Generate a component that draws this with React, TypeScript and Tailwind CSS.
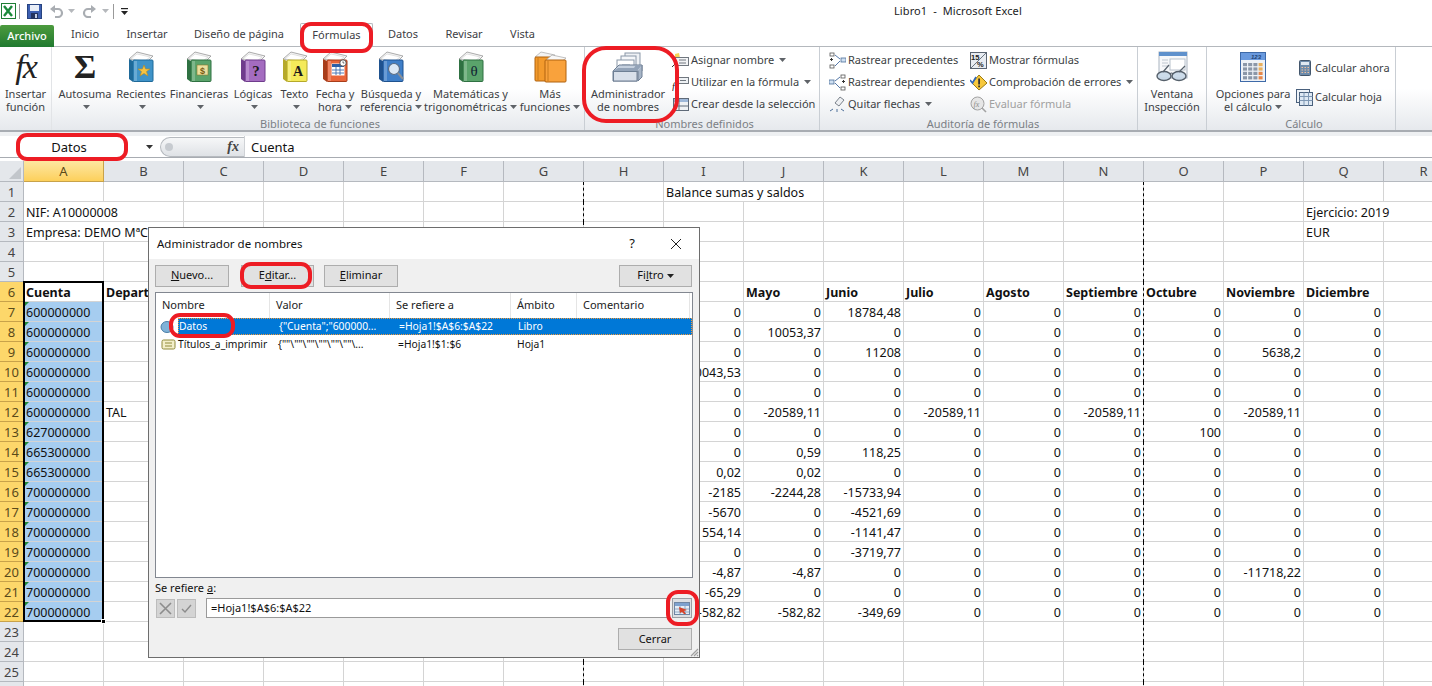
import React from 'react';

const COLS = 'ABCDEFGHIJKLMNOPQR'.split('');

type Cell = { t: string; b?: boolean; r?: boolean };
const cells: Record<string, Cell> = {
  I1: { t: 'Balance sumas y saldos' },
  A2: { t: 'NIF: A10000008' },
  Q2: { t: 'Ejercicio: 2019' },
  A3: { t: 'Empresa: DEMO MªC' },
  Q3: { t: 'EUR' },
  B12: { t: 'TAL' },
};
['Cuenta', 'Depart'].forEach((t, i) => (cells[COLS[i] + '6'] = { t, b: true }));
['Mayo', 'Junio', 'Julio', 'Agosto', 'Septiembre', 'Octubre', 'Noviembre', 'Diciembre'].forEach(
  (t, i) => (cells[COLS[9 + i] + '6'] = { t, b: true })
);
const acc = ['600000000','600000000','600000000','600000000','600000000','600000000','627000000','665300000','665300000','700000000','700000000','700000000','700000000','700000000','700000000','700000000'];
acc.forEach((t, i) => (cells['A' + (7 + i)] = { t }));
const nums: string[][] = [
  ['0','0','18784,48','0','0','0','0','0','0'],
  ['0','10053,37','0','0','0','0','0','0','0'],
  ['0','0','11208','0','0','0','0','5638,2','0'],
  ['-10043,53','0','0','0','0','0','0','0','0'],
  ['0','0','0','0','0','0','0','0','0'],
  ['0','-20589,11','0','-20589,11','0','-20589,11','0','-20589,11','0'],
  ['0','0','0','0','0','0','100','0','0'],
  ['0','0,59','118,25','0','0','0','0','0','0'],
  ['0,02','0,02','0','0','0','0','0','0','0'],
  ['-2185','-2244,28','-15733,94','0','0','0','0','0','0'],
  ['-5670','0','-4521,69','0','0','0','0','0','0'],
  ['-1554,14','0','-1141,47','0','0','0','0','0','0'],
  ['0','0','-3719,77','0','0','0','0','0','0'],
  ['-4,87','-4,87','0','0','0','0','0','-11718,22','0'],
  ['-65,29','0','0','0','0','0','0','0','0'],
  ['-582,82','-582,82','-349,69','0','0','0','0','0','0'],
];
nums.forEach((row, ri) =>
  row.forEach((t, ci) => (cells[COLS[8 + ci] + (7 + ri)] = { t, r: true }))
);

const Caret = ({ c = '#5f6368' }: { c?: string }) => (
  <svg width="7" height="4" viewBox="0 0 7 4" className="inline-block ml-[3px] align-middle shrink-0">
    <polygon points="0,0 7,0 3.5,4" fill={c} />
  </svg>
);

const Book = ({ c, d, children }: { c: string; d: string; children?: React.ReactNode }) => (
  <svg width="26" height="32" viewBox="0 0 26 32">
    <polygon points="1,8 9,1 25,5 19,11" fill="#f4f4f4" stroke="#8a8a8a" strokeWidth=".7" />
    <polygon points="3,8 9,3 22,6 17,10" fill="#ffffff" stroke="#c8c8c8" strokeWidth=".5" />
    <polygon points="5,10 5,31 1,28 1,8" fill={d} />
    <rect x="5" y="9" width="20" height="21.5" rx="1" fill={c} stroke={d} strokeWidth="1" />
    <rect x="6" y="10" width="3" height="20" fill="#ffffff" opacity=".22" />
    {children}
  </svg>
);

const FxIcon = () => (
  <span className="font-['Liberation_Serif',serif] italic text-[34px] leading-none text-[#222] tracking-[-2px]">
    fx
  </span>
);

const Calendar = () => (
  <g>
    <rect x="10" y="13" width="12" height="11" fill="#fff" stroke="#fff" />
    <rect x="10" y="13" width="12" height="3" fill="#2d5fa8" />
    <path d="M10 19h12M10 22h12M14 16v8M18 16v8" stroke="#3f6db0" strokeWidth=".9" />
    <circle cx="21" cy="12" r="3.2" fill="#fff" stroke="#333" strokeWidth=".8" />
    <path d="M21 10.3V12h1.4" stroke="#333" strokeWidth=".7" fill="none" />
  </g>
);

const Books = () => (
  <svg width="33" height="32" viewBox="0 0 33 32">
    <polygon points="1,6 7,1 21,4 15,9" fill="#f3f3f3" stroke="#999" strokeWidth=".6" />
    <rect x="1" y="6" width="17" height="24" rx="1" fill="#f39a2c" stroke="#b0620f" />
    <polygon points="12,9 18,4 32,7 26,12" fill="#f8f8f8" stroke="#999" strokeWidth=".6" />
    <rect x="11" y="9" width="21" height="22" rx="1" fill="#f9a23c" stroke="#b0620f" />
    <path d="M4 7v22M14 10v20" stroke="#c87a1c" strokeWidth="1" />
  </svg>
);

const CardBox = () => (
  <svg width="32" height="30" viewBox="0 0 32 30">
    <rect x="13" y="1" width="15" height="13" fill="#eef1f5" stroke="#8997a8" />
    <rect x="9" y="4" width="15" height="13" fill="#f5f7fa" stroke="#8997a8" />
    <rect x="5" y="8" width="17" height="11" fill="#ffffff" stroke="#8997a8" />
    <path d="M10 13h8" stroke="#8997a8" />
    <polygon points="1,19 7,13 30,13 30,19 25,19 25,29 1,29" fill="#c5d0de" stroke="#6e7f94" />
    <polygon points="1,19 25,19 30,13 24,13 22,16 6,16" fill="#93a3b8" />
    <rect x="1.5" y="19.5" width="23.5" height="9.5" fill="#d9e0ea" stroke="#6e7f94" />
    <path d="M26 19v10l4-4V13" fill="#a7b5c7" stroke="#6e7f94" />
  </svg>
);

const Glasses = () => (
  <svg width="34" height="32" viewBox="0 0 34 32">
    <rect x="4" y="1" width="28" height="26" fill="#f7f8fa" stroke="#a9b3c0" />
    <rect x="4" y="1" width="28" height="4" fill="#5f91cc" />
    <rect x="15" y="8" width="15" height="11" fill="#fff" stroke="#b8c1cc" />
    <path d="M7 9h6M7 12h6M7 15h6" stroke="#c0c7d0" />
    <ellipse cx="9" cy="25" rx="7" ry="4.5" fill="#c8d8e8" fillOpacity=".9" stroke="#56606b" strokeWidth="1.4" />
    <ellipse cx="24" cy="25" rx="7" ry="4.5" fill="#c8d8e8" fillOpacity=".9" stroke="#56606b" strokeWidth="1.4" />
    <path d="M15 23q1.5-2 3 0M8 21L14 14M24 21l6-6" stroke="#56606b" strokeWidth="1.2" fill="none" />
  </svg>
);

const CalcBig = () => (
  <svg width="26" height="30" viewBox="0 0 26 30">
    <rect x=".5" y=".5" width="25" height="29" fill="#eef2f7" stroke="#3e6aa8" />
    <polygon points="1,1 25,1 25,8 1,8" fill="#6a9ade" />
    <text x="21" y="7" fontSize="6" fontStyle="italic" fontWeight="700" textAnchor="end" fill="#20406f" fontFamily="Liberation Sans, sans-serif">123</text>
    {[0, 1, 2, 3].map((r) =>
      [0, 1, 2, 3].map((c) => (
        <rect key={r + '-' + c} x={3 + c * 5.2} y={11 + r * 4.4} width="4" height="3.2"
          fill={c === 3 && r > 1 ? '#e6884c' : c === 3 ? '#e8b05e' : '#8b97a8'} />
      ))
    )}
  </svg>
);

const S = ({ children }: { children: React.ReactNode }) => (
  <svg width="17" height="17" viewBox="0 0 17 17" className="shrink-0">{children}</svg>
);

const NameTag = () => (
  <S>
    <polygon points="3,2 7,1 8,6 3,6" fill="#f5d457" />
    <rect x="3.5" y="5.5" width="13" height="8" fill="#f3f4f6" stroke="#70777f" />
    <path d="M7 8h7M7 11h7" stroke="#70777f" />
    <path d="M0 15l3-3" stroke="#333" />
  </S>
);
const UseIn = () => (
  <S>
    <rect x="5.5" y="3.5" width="11" height="6" fill="#eef1f4" stroke="#70777f" />
    <text x="0" y="16" fontSize="10" fontStyle="italic" fontFamily="Liberation Serif, serif" fill="#222">f</text>
    <path d="M8 6.5h6" stroke="#70777f" />
  </S>
);
const FromSel = () => (
  <S>
    <rect x="1.5" y="2.5" width="15" height="12" fill="#eef1f4" stroke="#5f6a78" />
    <rect x="2" y="3" width="14" height="3" fill="#9db7d8" />
    <path d="M1.5 10h15M7 3v11" stroke="#5f6a78" />
  </S>
);
const TracePre = () => (
  <S>
    <rect x="1" y="1" width="4" height="3" fill="#fff" stroke="#555" strokeWidth=".8" />
    <rect x="1" y="13" width="4" height="3" fill="#fff" stroke="#555" strokeWidth=".8" />
    <rect x="12" y="6" width="5" height="4" fill="#cfe0f2" stroke="#4d6f99" strokeWidth=".8" />
    <path d="M4 7.5H1M2.5 6v3" stroke="#333" />
    <path d="M6 3l5 4M6 14l5-5" stroke="#5578a8" />
  </S>
);
const TraceDep = () => (
  <S>
    <rect x="0" y="6" width="5" height="4" fill="#cfe0f2" stroke="#4d6f99" strokeWidth=".8" />
    <rect x="12" y="1" width="4" height="3" fill="#fff" stroke="#555" strokeWidth=".8" />
    <rect x="12" y="13" width="4" height="3" fill="#fff" stroke="#555" strokeWidth=".8" />
    <path d="M13 7.5h3M14.5 6v3" stroke="#333" />
    <path d="M6 7l5-4M6 9l5 5" stroke="#5578a8" />
  </S>
);
const Eraser = () => (
  <S>
    <polygon points="6,7 11,1 15,4 10,10" fill="#eef0f3" stroke="#7b828b" />
    <path d="M1 15l3-2M8 16v-3M15 15l-3-2" stroke="#4d6f99" />
  </S>
);
const ShowF = () => (
  <S>
    <rect x=".5" y=".5" width="16" height="16" fill="#e8ecf1" stroke="#5a6470" />
    <text x="1" y="8" fontSize="7.5" fontWeight="700" fontFamily="Liberation Sans, sans-serif" fill="#222">15</text>
    <text x="7" y="15" fontSize="7.5" fontWeight="700" fontFamily="Liberation Sans, sans-serif" fill="#222">%</text>
    <path d="M1 16L16 1" stroke="#6b7683" />
  </S>
);
const ErrCheck = () => (
  <S>
    <polygon points="9,1 17,9 9,16 2,9" fill="#f7c83c" stroke="#9a7a12" />
    <rect x="8.2" y="4.5" width="1.8" height="6" fill="#333" />
    <rect x="8.2" y="11.5" width="1.8" height="1.8" fill="#333" />
    <path d="M0 6l2.5 3L6 3" stroke="#2f66b8" strokeWidth="1.6" fill="none" />
  </S>
);
const EvalF = () => (
  <S>
    <circle cx="7.5" cy="7.5" r="6.5" fill="#e6e6e6" stroke="#a2a2a2" />
    <text x="3.5" y="10.5" fontSize="8" fontStyle="italic" fontFamily="Liberation Serif, serif" fill="#8c8c8c">fx</text>
    <path d="M12 12l4 4" stroke="#a2a2a2" strokeWidth="1.6" />
  </S>
);
const CalcNow = () => (
  <S>
    <rect x="3.5" y=".5" width="11" height="15" rx="1" fill="#6e8cab" stroke="#43566c" />
    <rect x="5" y="2" width="8" height="3" fill="#dfe8f1" />
    <path d="M5.5 7.5h1.5M8.5 7.5H10M11.5 7.5H13M5.5 10h1.5M8.5 10H10M11.5 10H13M5.5 12.5h1.5M8.5 12.5H10M11.5 12.5H13" stroke="#f0c0a0" />
  </S>
);
const CalcSheet = () => (
  <S>
    <rect x=".5" y=".5" width="13" height="13" fill="#eef3f8" stroke="#49607c" />
    <rect x="3.5" y="3.5" width="13" height="13" fill="#dde8f3" stroke="#49607c" />
    <path d="M3.5 7.5h13M3.5 11.5h13M8 3.5v13M12.5 3.5v13" stroke="#7e97b3" />
  </S>
);

function LargeBtn({ w, icon, l1, l2, caret, ml }: { w: string; icon: React.ReactNode; l1: string; l2?: string; caret?: boolean; ml?: string }) {
  return (
    <div className={`flex flex-col items-center shrink-0 ${w} ${ml ?? ''}`}>
      <div className="h-[40px] flex items-center justify-center">{icon}</div>
      <div className="text-center leading-[13px] whitespace-nowrap">{l1}</div>
      <div className="flex items-center justify-center leading-[13px] whitespace-nowrap h-[13px]">
        {l2}
        {caret && <Caret />}
      </div>
    </div>
  );
}

function SmallBtn({ icon, t, caret, dim }: { icon: React.ReactNode; t: string; caret?: boolean; dim?: boolean }) {
  return (
    <div className={`flex items-center h-[22px] gap-[2px] whitespace-nowrap ${dim ? 'text-[#a0a0a0]' : ''}`}>
      {icon}
      <span>{t}</span>
      {caret && <Caret />}
    </div>
  );
}

function Group({ w, label, children }: { w: string; label?: string; children: React.ReactNode }) {
  return (
    <div className={`relative flex flex-col shrink-0 ${w} border-r border-[#c9ced4]`}>
      <div className="flex h-[68px] shrink-0">{children}</div>
      <div className="text-center text-[#7b7f85] leading-[13px] mt-[2px] whitespace-nowrap">{label ?? '\u00a0'}</div>
    </div>
  );
}

const Btn = ({ w, children }: { w: string; children: React.ReactNode }) => (
  <div className={`${w} h-[22px] flex items-center justify-center bg-[#e1e1e1] border border-[#adadad] text-[#111] whitespace-nowrap`}>
    {children}
  </div>
);

const Ring = ({ cls }: { cls: string }) => (
  <div className={`absolute border-[4px] border-[#ed1c24] z-30 pointer-events-none ${cls}`} />
);

export default function App() {
  return (
    <div className="relative w-[1432px] h-[686px] overflow-hidden bg-white font-['Noto_Sans',sans-serif] text-[11px] text-[#3c3f44] flex flex-col">
      {/* Title bar */}
      <div className="flex items-center h-[22px] shrink-0 relative">
        <div className="flex items-center pl-[1px] w-[894px] shrink-0">
          <svg width="15" height="16" viewBox="0 0 15 16">
            <rect x=".5" y=".5" width="14" height="15" fill="#fff" stroke="#1e7e34" />
            <path d="M3 3l8 10M11 3L3 13" stroke="#1c8a3b" strokeWidth="2.4" />
          </svg>
          <div className="w-px h-[15px] bg-[#9a9a9a] ml-[3px]" />
          <svg width="15" height="15" viewBox="0 0 15 15" className="ml-[7px]">
            <rect x=".5" y=".5" width="14" height="14" fill="#3c5fb1" stroke="#27437f" />
            <rect x="3" y="1" width="9" height="6" fill="#e9eef7" />
            <rect x="4" y="9" width="7" height="6" fill="#24345f" />
            <rect x="8" y="10" width="2" height="4" fill="#c5d0e6" />
          </svg>
          <svg width="14" height="14" viewBox="0 0 14 14" className="ml-[8px]">
            <path d="M3 5h5a4 4 0 0 1 0 8H5" fill="none" stroke="#a9adb2" strokeWidth="2.2" />
            <polygon points="0,5 5,1 5,9" fill="#a9adb2" />
          </svg>
          <span className="ml-[1px] flex"><Caret c="#b5b8bc" /></span>
          <svg width="14" height="14" viewBox="0 0 14 14" className="ml-[7px]">
            <path d="M11 5H6a4 4 0 0 0 0 8h3" fill="none" stroke="#a9adb2" strokeWidth="2.2" />
            <polygon points="14,5 9,1 9,9" fill="#a9adb2" />
          </svg>
          <span className="ml-[3px] flex"><Caret c="#b5b8bc" /></span>
          <div className="w-px h-[15px] bg-[#9a9a9a] ml-[4px]" />
          <svg width="9" height="9" viewBox="0 0 9 9" className="ml-[6px]">
            <rect x="1" y="1" width="7" height="1.2" fill="#222" />
            <polygon points="1,4 8,4 4.5,8" fill="#222" />
          </svg>
        </div>
        <div className="text-[11px] tracking-[0.1px] text-[#222] whitespace-pre">Libro1  -  Microsoft Excel</div>
      </div>

      {/* Tabs */}
      <div className="flex h-[25px] shrink-0 text-[11px] text-[#3d4044] border-b border-[#b4b8bd] items-end">
        <div className="w-[54px] h-[22px] mb-[-1px] rounded-t-[2px] bg-gradient-to-b from-[#4c9b3e] to-[#1f7a30] text-white font-medium flex items-center justify-center">Archivo</div>
        <div className="w-[62px] h-[23px] flex items-center justify-center">Inicio</div>
        <div className="w-[62px] h-[23px] flex items-center justify-center">Insertar</div>
        <div className="w-[122px] h-[23px] flex items-center justify-center">Diseño de página</div>
        <div className="w-[73px] h-[24px] mb-[-1px] flex items-center justify-center bg-white border border-b-0 border-[#b4b8bd] rounded-t-[2px]">Fórmulas</div>
        <div className="w-[60px] h-[23px] flex items-center justify-center">Datos</div>
        <div className="w-[62px] h-[23px] flex items-center justify-center">Revisar</div>
        <div className="w-[55px] h-[23px] flex items-center justify-center">Vista</div>
      </div>

      {/* Ribbon */}
      <div className="flex h-[85px] shrink-0 bg-gradient-to-b from-white via-white to-[#e6e9ed] border-b-2 border-[#a8acb2]">
        <div className="w-[51px] shrink-0 flex flex-col items-center">
          <div className="h-[40px] flex items-center justify-center"><FxIcon /></div>
          <div className="leading-[13px]">Insertar</div>
          <div className="leading-[13px]">función</div>
        </div>
        <Group w="w-[534px] pl-[4px] border-l border-l-[#e2e4e7]" label="Biblioteca de funciones">
          <LargeBtn w="w-[58px]" caret l2="" l1="Autosuma" icon={<span className="font-['Liberation_Serif',serif] font-bold text-[34px] leading-none text-[#222]">Σ</span>} />
          <LargeBtn w="w-[54px]" caret l2="" l1="Recientes" icon={<Book c="#3f93c8" d="#1f6a9a"><polygon points="16,14 17.6,18 22,18 18.5,20.6 20,25 16,22.4 12,25 13.5,20.6 10,18 14.4,18" fill="#f6c344" stroke="#b88a1c" strokeWidth=".6" /></Book>} />
          <LargeBtn w="w-[62px]" caret l2="" l1="Financieras" icon={<Book c="#5aa36b" d="#2f7142"><rect x="11" y="14" width="11" height="10" fill="#eadf9e" stroke="#8a7a2c" strokeWidth=".6" /><text x="16.5" y="22.5" fontSize="9" fontWeight="700" textAnchor="middle" fill="#7a5a10" fontFamily="Liberation Sans, sans-serif">$</text></Book>} />
          <LargeBtn w="w-[46px]" caret l2="" l1="Lógicas" icon={<Book c="#a46cc0" d="#6f3c8c"><text x="16" y="25" fontSize="15" fontWeight="700" textAnchor="middle" fill="#1a1a1a" fontFamily="Liberation Serif, serif">?</text></Book>} />
          <LargeBtn w="w-[37px]" caret l2="" l1="Texto" icon={<Book c="#f4ea5a" d="#b6a92a"><text x="16" y="25" fontSize="14" fontWeight="700" textAnchor="middle" fill="#1a1a1a" fontFamily="Liberation Serif, serif">A</text></Book>} />
          <LargeBtn w="w-[44px]" caret l1="Fecha y" l2="hora" icon={<Book c="#e9653a" d="#a83d1a"><Calendar /></Book>} />
          <LargeBtn w="w-[68px]" caret l1="Búsqueda y" l2="referencia" icon={<Book c="#3f7fc8" d="#1f528f"><circle cx="16" cy="18" r="5.5" fill="#dbe8f5" stroke="#5a6d84" strokeWidth="1.2" /><path d="M20 22l5 6" stroke="#8a8f96" strokeWidth="2" /></Book>} />
          <LargeBtn w="w-[91px]" caret l1="Matemáticas y" l2="trigonométricas" icon={<Book c="#5aa36b" d="#2f7142"><text x="16" y="25" fontSize="15" textAnchor="middle" fill="#123" fontFamily="Liberation Serif, serif">θ</text></Book>} />
          <LargeBtn w="w-[62px]" ml="ml-[3px]" caret l1="Más" l2="funciones" icon={<Books />} />
        </Group>
        <Group w="w-[235px] pl-[5px]" label="Nombres definidos">
          <LargeBtn w="w-[76px]" l1="Administrador" l2="de nombres" icon={<CardBox />} />
          <div className="flex flex-col pt-[2px] ml-[6px]">
            <SmallBtn icon={<NameTag />} t="Asignar nombre" caret />
            <SmallBtn icon={<UseIn />} t="Utilizar en la fórmula" caret />
            <SmallBtn icon={<FromSel />} t="Crear desde la selección" />
          </div>
        </Group>
        <Group w="w-[318px] pl-[9px]" label="Auditoría de fórmulas">
          <div className="flex flex-col pt-[2px] w-[141px]">
            <SmallBtn icon={<TracePre />} t="Rastrear precedentes" />
            <SmallBtn icon={<TraceDep />} t="Rastrear dependientes" />
            <SmallBtn icon={<Eraser />} t="Quitar flechas" caret />
          </div>
          <div className="flex flex-col pt-[2px]">
            <SmallBtn icon={<ShowF />} t="Mostrar fórmulas" />
            <SmallBtn icon={<ErrCheck />} t="Comprobación de errores" caret />
            <SmallBtn icon={<EvalF />} t="Evaluar fórmula" dim />
          </div>
        </Group>
        <Group w="w-[69px]">
          <LargeBtn w="w-full" l1="Ventana" l2="Inspección" icon={<Glasses />} />
        </Group>
        <Group w="w-[189px] pl-[6px]" label="Cálculo">
          <LargeBtn w="w-[80px]" caret l1="Opciones para" l2="el cálculo" icon={<CalcBig />} />
          <div className="flex flex-col pt-[10px] ml-[3px] gap-[7px]">
            <SmallBtn icon={<CalcNow />} t="Calcular ahora" />
            <SmallBtn icon={<CalcSheet />} t="Calcular hoja" />
          </div>
        </Group>
      </div>

      {/* Formula bar */}
      <div className="h-[26px] shrink-0 pt-[4px] bg-[#eef0f2]">
        <div className="h-[22px] bg-white border-b border-[#a8acb2] flex items-center text-[13px] text-[#111]">
          <div className="w-[143px] flex justify-center pl-[15px] pr-[20px] pt-[2px]">Datos</div>
          <Caret c="#333" />
          <div className="ml-[7px] w-[84px] h-[20px] rounded-l-full border border-[#b6babf] border-r-0 bg-gradient-to-b from-[#f6f7f8] to-[#dfe2e6] flex items-center justify-between pl-[4px] pr-[5px]">
            <span className="w-[8px] h-[8px] rounded-full bg-[#c7cbd0]" />
            <span className="font-['Liberation_Serif',serif] italic font-bold text-[14px] text-[#444]">fx</span>
          </div>
          <div className="h-full border-l border-[#cfd2d6] pl-[6px] pt-[2px] flex items-center">Cuenta</div>
        </div>
      </div>

      {/* Sheet */}
      <div className="relative flex-1 min-h-0 overflow-hidden pt-[3px] font-['Noto_Sans',sans-serif] text-[12.5px] text-[#111]">
        <div className="relative grid grid-cols-[24px_repeat(18,80px)] grid-rows-[21px] w-[1464px] auto-rows-[20px]">
          <div className="bg-[#e4e7eb] border-r border-b border-[#b5b9bf] flex items-end justify-end p-[2px]">
            <svg width="12" height="12" viewBox="0 0 12 12"><polygon points="12,0 12,12 0,12" fill="#c2c6cb" /></svg>
          </div>
          {COLS.map((c) => (
            <div key={c} className={`border-r border-b flex items-center justify-center text-[13px] pt-[2px] ${c === 'A' ? 'bg-gradient-to-b from-[#fde7a0] to-[#fdd05a] border-[#c8a24a] text-[#5a4a1a]' : 'bg-[#e4e7eb] border-[#b5b9bf] text-[#444]'}`}>
              {c}
            </div>
          ))}
          {Array.from({ length: 26 }, (_, i) => i + 1).map((r) => (
            <React.Fragment key={r}>
              <div className={`border-r border-b flex items-center justify-center text-[13px] pt-[2px] ${r >= 6 && r <= 22 ? 'bg-[#fdd76a] border-[#c8a24a] text-[#5a4a1a]' : 'bg-[#e4e7eb] border-[#b5b9bf] text-[#444]'}`}>
                {r < 26 ? r : ''}
              </div>
              {COLS.map((c) => {
                const cell = cells[c + r];
                const sel = c === 'A' && r >= 7 && r <= 22;
                const overflowing = (c === 'I' && r === 1) || (c === 'A' && (r === 2 || r === 3)) || (c === 'Q' && r === 2);
                return (
                  <div
                    key={c}
                    className={`relative border-b border-[#d4d4d4] ${overflowing ? '' : 'border-r'} flex items-center px-[2px] pt-[3px] whitespace-nowrap ${sel ? 'bg-[#a6cdf0]' : ''} ${cell?.r ? 'justify-end' : ''} ${cell?.b ? 'font-bold' : ''}`}
                  >
                    {cell?.t}
                    {sel && (
                      <svg width="5" height="5" viewBox="0 0 5 5" className="absolute left-0 top-0">
                        <polygon points="0,0 5,0 0,5" fill="#1f8a3b" />
                      </svg>
                    )}
                    {(c === 'G' || c === 'N') && (
                      <span className="absolute right-[-1px] top-0 bottom-[-1px] border-r border-dashed border-black" />
                    )}
                  </div>
                );
              })}
            </React.Fragment>
          ))}
          {/* selection frame */}
          <div className="absolute left-[23px] top-[120px] w-[81px] h-[341px] border-2 border-black pointer-events-none" />
          <div className="absolute left-[101px] top-[458px] w-[5px] h-[5px] bg-black border border-white pointer-events-none" />
        </div>
      </div>

      {/* Dialog */}
      <div className="absolute left-[148px] top-[227px] w-[552px] h-[431px] bg-[#f0f0f0] border border-[#6d6d6d] z-20 flex flex-col text-[11px] text-[#111]">
        <div className="h-[31px] shrink-0 bg-white flex items-center pl-[8px] pr-[17px]">
          <span className="text-[11.5px] flex-1">Administrador de nombres</span>
          <span className="text-[13px] mr-[35px]">?</span>
          <svg width="12" height="12" viewBox="0 0 12 12"><path d="M1 1l10 10M11 1L1 11" stroke="#222" strokeWidth="1" /></svg>
        </div>
        <div className="flex items-center pl-[6px] pr-[7px] h-[33px] shrink-0">
          <Btn w="w-[74px]"><span><u>N</u>uevo...</span></Btn>
          <Btn w="w-[73px] ml-[12px]"><span>E<u>d</u>itar...</span></Btn>
          <Btn w="w-[74px] ml-[10px]"><span><u>E</u>liminar</span></Btn>
          <div className="flex-1" />
          <Btn w="w-[73px]"><span>Fi<u>l</u>tro</span><Caret c="#222" /></Btn>
        </div>
        <div className="mx-[6px] h-[286px] shrink-0 bg-white border border-[#828790] flex flex-col">
          <div className="flex h-[25px] shrink-0 text-[#222]">
            {[['Nombre', 'w-[114px]'], ['Valor', 'w-[120px]'], ['Se refiere a', 'w-[121px]'], ['Ámbito', 'w-[66px]'], ['Comentario', 'w-[113px]']].map(([t, w]) => (
              <div key={t} className={`${w} border-r border-[#e5e5e5] pl-[6px] flex items-center`}>{t}</div>
            ))}
          </div>
          <div className="flex h-[17px] items-center shrink-0 text-[10.3px]">
            <svg width="18" height="14" viewBox="0 0 18 14" className="ml-[3px] shrink-0">
              <ellipse cx="8" cy="7" rx="6" ry="5.5" fill="#7fb2d8" stroke="#4b7fa8" />
            </svg>
            <div className="flex-1 h-full flex items-center bg-[#0078d7] text-white border border-dotted border-[#f09a3c] ml-[1px]">
              <span className="w-[100px]">Datos</span>
              <span className="w-[120px]">{'{"Cuenta";"600000...'}</span>
              <span className="w-[119px]">=Hoja1!$A$6:$A$22</span>
              <span>Libro</span>
            </div>
          </div>
          <div className="flex h-[17px] items-center shrink-0 mt-[1px] text-[10.3px]">
            <svg width="18" height="14" viewBox="0 0 18 14" className="ml-[3px] shrink-0">
              <rect x="3" y="2" width="13" height="9" rx="1.5" fill="#f3efc9" stroke="#8f8a3a" />
              <path d="M6 5h7M6 8h7" stroke="#8f8a3a" />
            </svg>
            <div className="flex-1 flex items-center ml-[1px] text-[#111]">
              <span className="w-[100px] whitespace-nowrap">Títulos_a_imprimir</span>
              <span className="w-[120px] whitespace-nowrap">{'{""\\""\\""\\""\\""\\""\\...'}</span>
              <span className="w-[119px]">=Hoja1!$1:$6</span>
              <span>Hoja1</span>
            </div>
          </div>
        </div>
        <div className="ml-[6px] mt-[1px] leading-[14px] h-[17px] flex items-center">Se refiere <u className="ml-[3px]">a</u>:</div>
        <div className="flex items-center pl-[7px] pr-[7px] h-[20px] shrink-0 mt-[2px]">
          <div className="w-[19px] h-[19px] bg-[#d4d4d4] border border-[#bcbcbc] flex items-center justify-center">
            <svg width="13" height="13" viewBox="0 0 13 13"><path d="M1 1l11 11M12 1L1 12" stroke="#8c8c8c" strokeWidth="1.6" /></svg>
          </div>
          <div className="w-[19px] h-[19px] ml-[2px] bg-[#d4d4d4] border border-[#bcbcbc] flex items-center justify-center">
            <svg width="11" height="9" viewBox="0 0 11 9"><path d="M1 5l3 3 6-7" stroke="#8c8c8c" strokeWidth="1.4" fill="none" /></svg>
          </div>
          <div className="ml-[10px] w-[463px] h-[20px] bg-white border border-[#9a9a9a] flex items-center pl-[4px]">
            =Hoja1!$A$6:$A$22
          </div>
          <div className="ml-[3px] w-[20px] h-[20px] bg-[#dde0e4] border border-[#9a9ea4] flex items-center justify-center">
            <svg width="16" height="13" viewBox="0 0 16 13">
              <rect x=".5" y=".5" width="15" height="12" fill="#e4edf6" stroke="#6f86a3" />
              <rect x="1" y="1" width="14" height="3" fill="#7ea2cf" />
              <path d="M1 7h14M1 10h14M6 4v8M11 4v8" stroke="#7f9ab9" strokeWidth=".8" />
              <polygon points="5,5 13,8 10,9 12,12 10,12 8,10 6,11" fill="#d8432a" />
            </svg>
          </div>
        </div>
        <div className="flex justify-end pr-[7px] mt-[10px]">
          <Btn w="w-[74px]">Cerrar</Btn>
        </div>
        <svg width="10" height="10" viewBox="0 0 10 10" className="absolute right-0 bottom-0">
          <path d="M9 2L2 9M9 5L5 9M9 8L8 9" stroke="#a0a0a0" strokeWidth="1.2" />
        </svg>
      </div>

      {/* Red annotation rings */}
      <Ring cls="left-[300px] top-[22px] w-[73px] h-[31px] rounded-[11px]" />
      <Ring cls="left-[16px] top-[133px] w-[112px] h-[28px] rounded-[11px]" />
      <Ring cls="left-[582px] top-[46px] w-[97px] h-[77px] rounded-[24px]" />
      <Ring cls="left-[240px] top-[262px] w-[72px] h-[27px] rounded-[11px]" />
      <Ring cls="left-[169px] top-[313px] w-[66px] h-[25px] rounded-[11px]" />
      <Ring cls="left-[666px] top-[590px] w-[33px] h-[36px] rounded-[12px]" />
    </div>
  );
}
